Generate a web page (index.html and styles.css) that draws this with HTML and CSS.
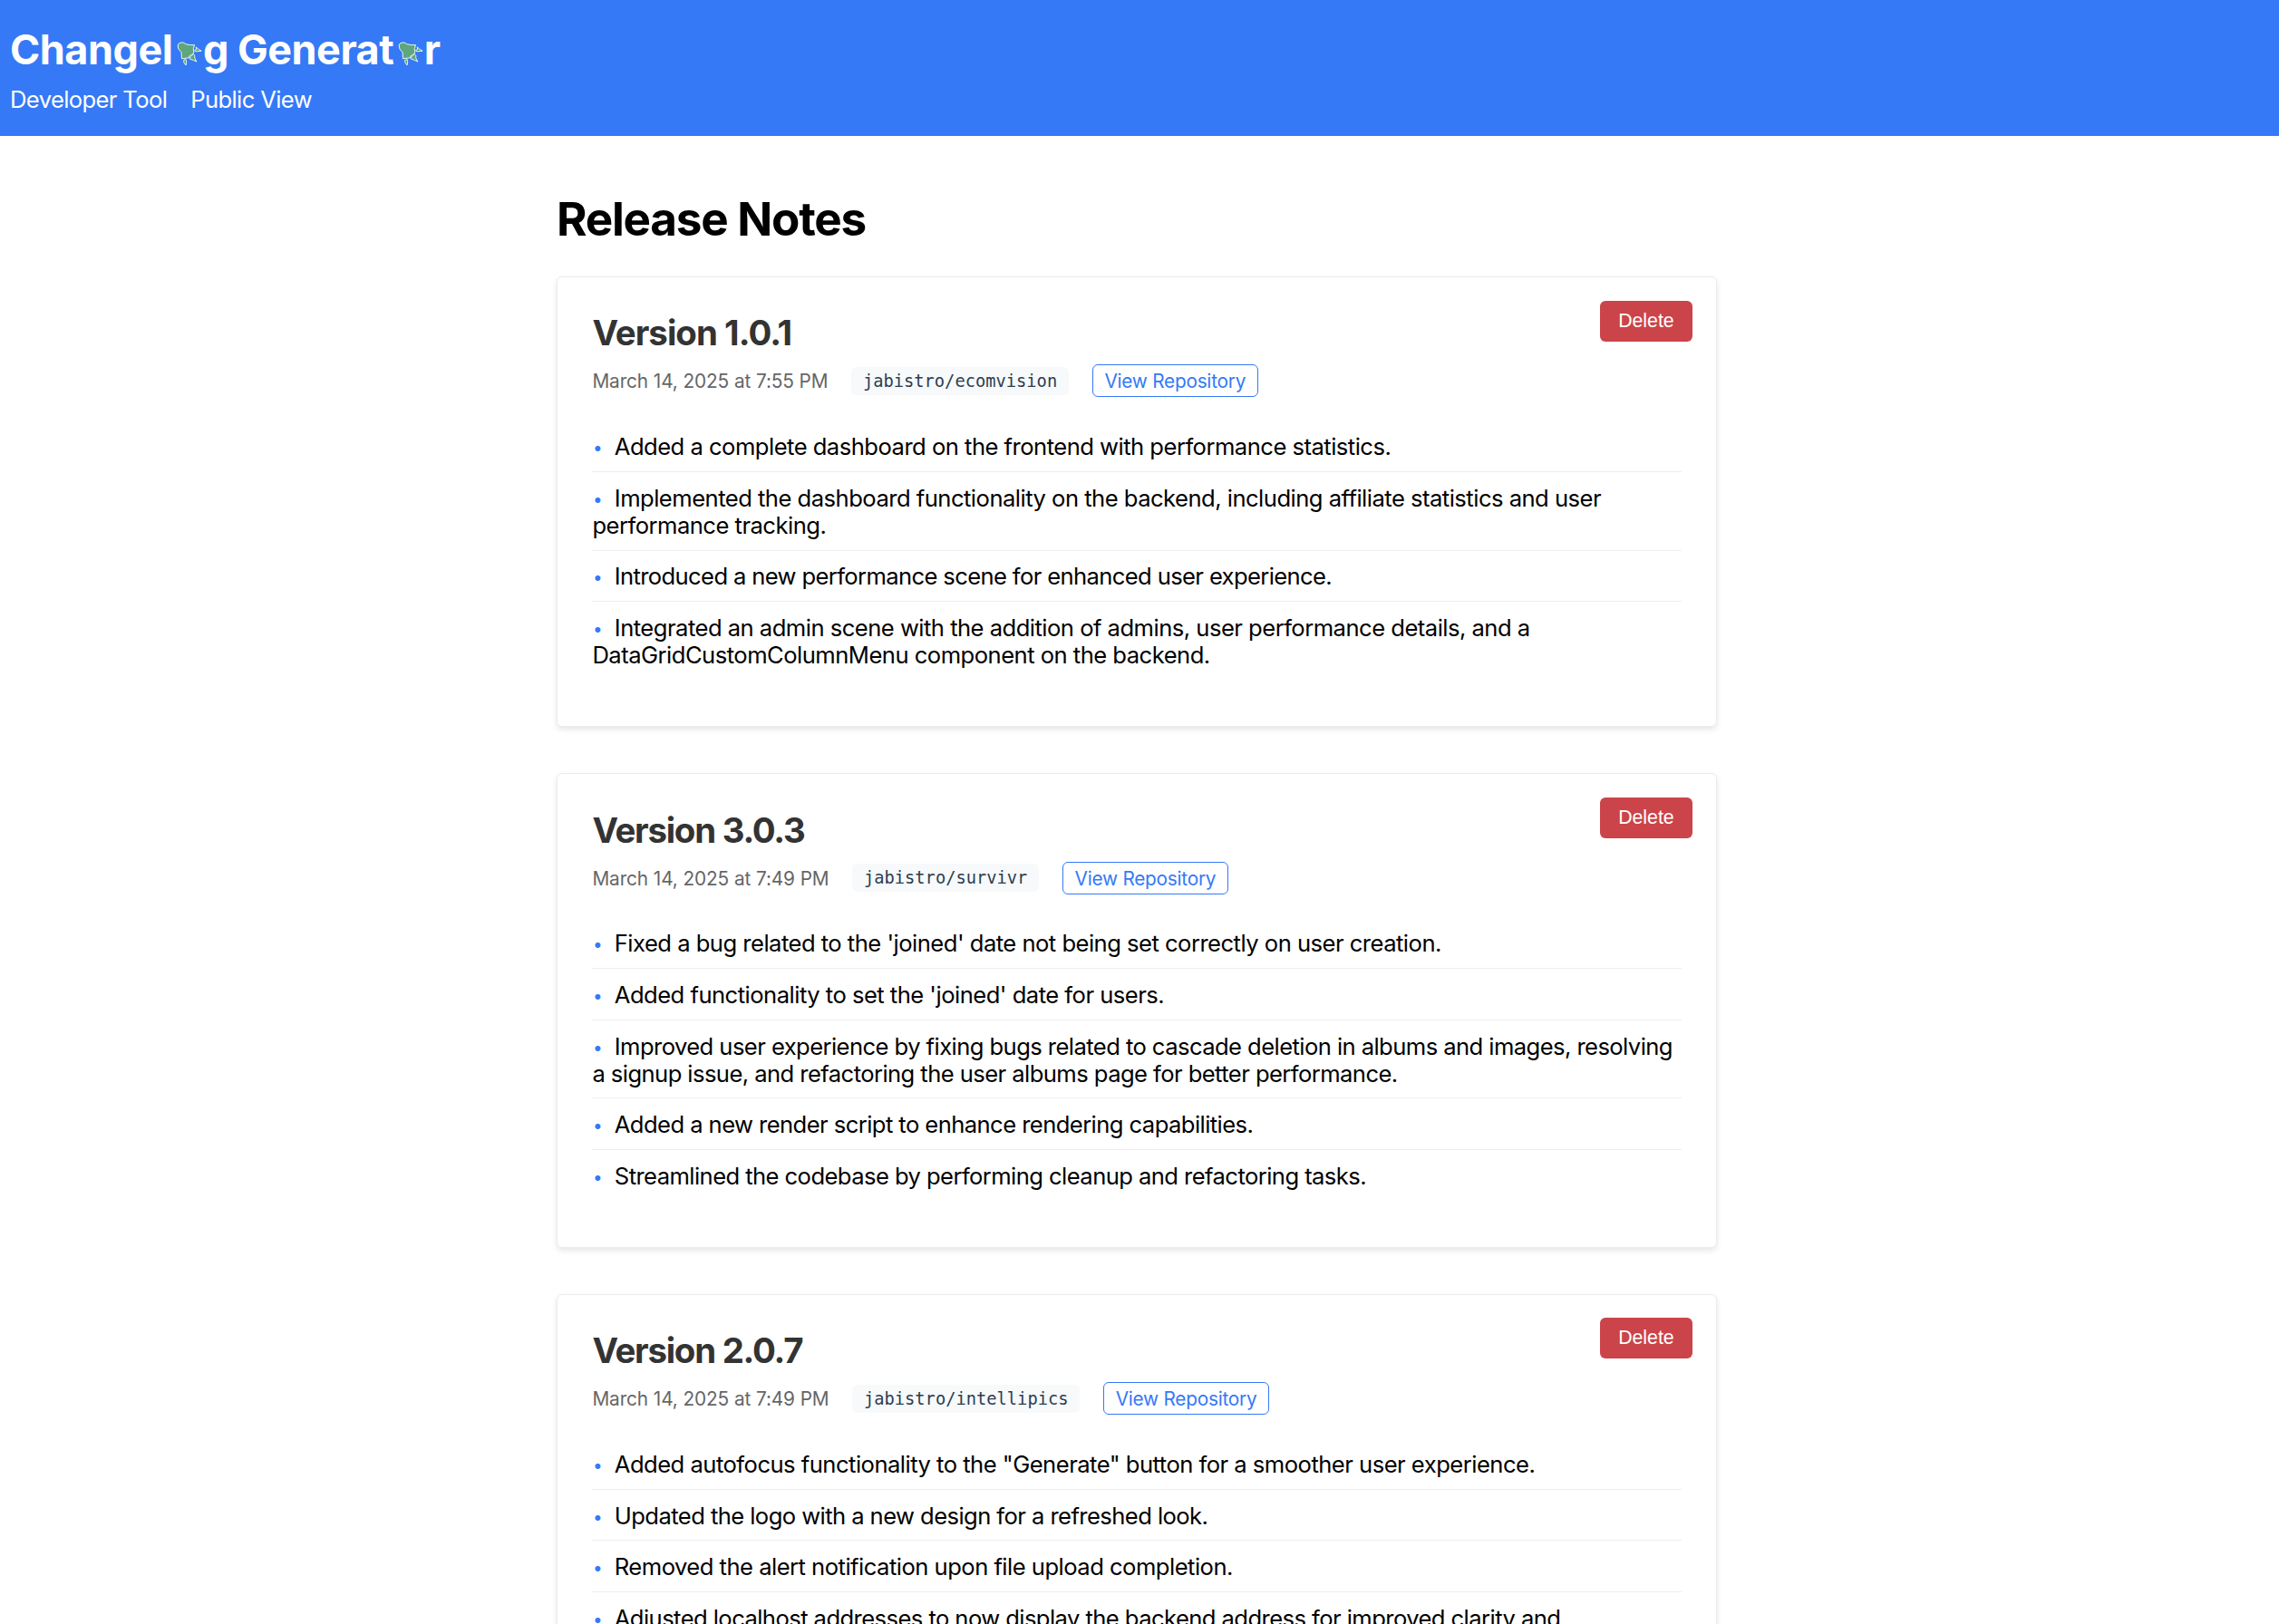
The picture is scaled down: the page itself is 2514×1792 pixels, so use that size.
FILE: index.html
```html
<!DOCTYPE html>
<html lang="en">
<head>
<meta charset="utf-8">
<title>Changelog Generator</title>
<link rel="stylesheet" href="styles.css">
</head>
<body>
<svg class="sprite" width="0" height="0" aria-hidden="true">
  <symbol id="rocket" viewBox="46 34 84 82">
    <path d="M49 46 Q51 38 60 37 Q70 35 75 42 Q88 46 105 45 L101 57 L103 71 L96 77 L87 83 L86 88 L62 91 L61 70 L51 58 Z"/>
    <path d="M110 52 L118 59 L128 65 L109 67 L105 63 L111 60 Z"/>
    <path d="M101 75 L106 82 L105 88 L112 101 L101 96 L88 91 L92 83 Z"/>
    <path d="M69 96 L76 93 L78 102 L76 113 L69 103 Z"/>
  </symbol>
</svg>
<header class="header">
  <h1 class="brand">Changel<svg class="brand-icon"><use href="#rocket"/></svg>g Generat<svg class="brand-icon"><use href="#rocket"/></svg>r</h1>
  <nav class="nav"><a class="nav-link">Developer Tool</a><a class="nav-link">Public View</a></nav>
</header>
<main class="main">
  <h2 class="page-title">Release Notes</h2>

  <article class="card">
    <button class="delete">Delete</button>
    <h3 class="version wide">Version 1.0.1</h3>
    <div class="meta"><span class="date">March 14, 2025 at 7:55 PM</span><code class="repo">jabistro/ecomvision</code><a class="view">View Repository</a></div>
    <ul class="changes">
      <li class="change">Added a complete dashboard on the frontend with performance statistics.</li>
      <li class="change">Implemented the dashboard functionality on the backend, including affiliate statistics and user<br>performance tracking.</li>
      <li class="change tighter">Introduced a new performance scene for enhanced user experience.</li>
      <li class="change">Integrated an admin scene with the addition of admins, user performance details, and a<br>DataGridCustomColumnMenu component on the backend.</li>
    </ul>
  </article>

  <article class="card">
    <button class="delete">Delete</button>
    <h3 class="version">Version 3.0.3</h3>
    <div class="meta"><span class="date">March 14, 2025 at 7:49 PM</span><code class="repo">jabistro/survivr</code><a class="view">View Repository</a></div>
    <ul class="changes">
      <li class="change">Fixed a bug related to the 'joined' date not being set correctly on user creation.</li>
      <li class="change">Added functionality to set the 'joined' date for users.</li>
      <li class="change tight">Improved user experience by fixing bugs related to cascade deletion in albums and images, resolving<br>a signup issue, and refactoring the user albums page for better performance.</li>
      <li class="change tight">Added a new render script to enhance rendering capabilities.</li>
      <li class="change tight">Streamlined the codebase by performing cleanup and refactoring tasks.</li>
    </ul>
  </article>

  <article class="card">
    <button class="delete">Delete</button>
    <h3 class="version">Version 2.0.7</h3>
    <div class="meta"><span class="date">March 14, 2025 at 7:49 PM</span><code class="repo">jabistro/intellipics</code><a class="view">View Repository</a></div>
    <ul class="changes">
      <li class="change">Added autofocus functionality to the "Generate" button for a smoother user experience.</li>
      <li class="change tight">Updated the logo with a new design for a refreshed look.</li>
      <li class="change">Removed the alert notification upon file upload completion.</li>
      <li class="change tight">Adjusted localhost addresses to now display the backend address for improved clarity and</li>
    </ul>
  </article>
</main>
</body>
</html>
```
FILE: styles.css
```css
*, *::before { box-sizing: border-box; }

body {
  margin: 0;
  height: 1792px;
  overflow: hidden;
  background: #fff;
  color: #000;
  font-family: Inter, "Liberation Sans", sans-serif;
  font-size: 25.6px;
  line-height: 30px;
}

h1, h2, h3, ul { margin: 0; padding: 0; }

.sprite { display: block; }

.header {
  height: 150px;
  padding: 27px 11px 0;
  background: #3579f6;
  color: #fff;
}
.brand {
  font-size: 45px;
  line-height: 56px;
  font-weight: 700;
  letter-spacing: -0.5px;
  white-space: nowrap;
}
.brand-icon {
  width: 28px;
  height: 27px;
  margin: 0 0.5px 0 5px;
  vertical-align: -2px;
  fill: #5ea67b;
  stroke: #eef5ee;
  stroke-width: 3;
  stroke-linejoin: round;
}
.nav { display: flex; gap: 26px; margin-top: 12px; }
.nav-link { letter-spacing: -0.63px; }

.main { width: 1280px; margin: 0 auto; padding-top: 60px; position: relative; left: -3px; }
.page-title {
  font-size: 51.2px;
  line-height: 62px;
  font-weight: 700;
  letter-spacing: -1.25px;
  margin-bottom: 33px;
}

.card {
  position: relative;
  padding: 38.4px 38.4px 51.2px;
  margin-bottom: 51.2px;
  border: 1px solid #ececec;
  border-radius: 6px;
  box-shadow: 0 3px 6px rgba(0, 0, 0, 0.1);
  background: #fff;
}
.version {
  font-size: 38.4px;
  line-height: 46px;
  font-weight: 700;
  letter-spacing: -1.25px;
  color: #333;
}
.version.wide { letter-spacing: -0.95px; }
.meta {
  display: flex;
  align-items: center;
  gap: 25.6px;
  height: 36px;
  margin: 12px 0 26px;
  font-size: 20.8px;
  color: #666;
}
.date { padding-top: 2px; letter-spacing: -0.1px; }
.repo {
  padding: 0 12.8px;
  border-radius: 6px;
  background: #f7f9fb;
  color: #2c3e50;
  font: 18.74px/31px "DejaVu Sans Mono", monospace;
}
.view {
  height: 36px;
  padding: 1px 12.8px 0;
  border: 1px solid #3579f6;
  border-radius: 6px;
  color: #3579f6;
  letter-spacing: -0.24px;
  line-height: 34px;
}
.delete {
  position: absolute;
  top: 25.6px;
  right: 25.6px;
  width: 102px;
  height: 45px;
  padding: 0 1px 0 0;
  border: 0;
  border-radius: 6px;
  background: #cb444a;
  color: #fff;
  font: 21.3px/43px "Liberation Sans", Arial, sans-serif;
}

.changes { list-style: none; }
.change {
  padding: 13.8px 0 11.8px;
  border-bottom: 1px solid #eee;
  letter-spacing: -0.52px;
  white-space: nowrap;
}
.change.tight { letter-spacing: -0.57px; }
.change.tighter { letter-spacing: -0.63px; }
.change:last-child { border-bottom: 0; }
.change::before {
  content: "•";
  display: inline-block;
  width: 24.4px;
  padding-left: 0.5px;
  color: #3579f6;
  font-size: 19px;
  line-height: 16px;
  vertical-align: 1px;
}
```
